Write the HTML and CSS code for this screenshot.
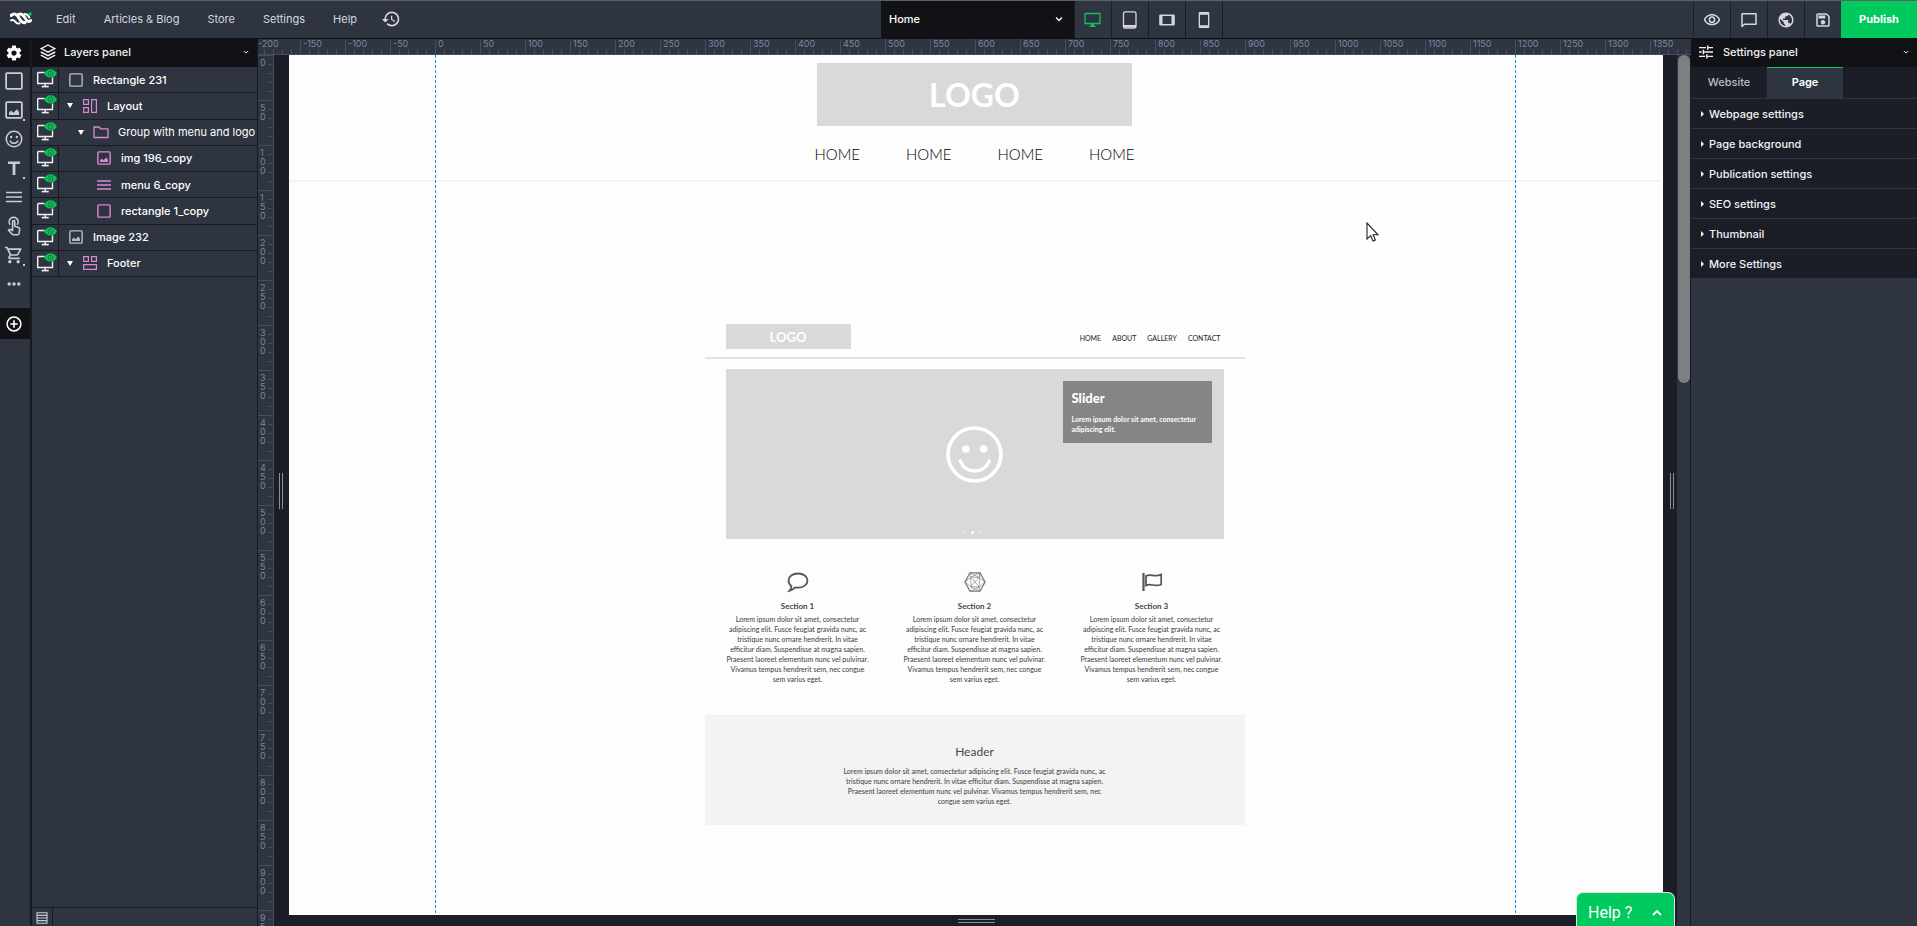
FILE: index.html
```html
<!DOCTYPE html>
<html lang="en">
<head>
<meta charset="utf-8">
<title>Website editor</title>
<link rel="stylesheet" href="styles.css">
</head>
<body>
<svg class="sprite" aria-hidden="true">
  <symbol id="square" viewBox="0 0 16 16"><rect x="1" y="1" width="14" height="14" rx="1" fill="none" stroke="currentColor" stroke-width="1.6"/></symbol>
  <symbol id="picture" viewBox="0 0 16 16"><rect x="1" y="1" width="14" height="14" rx="1" fill="none" stroke="currentColor" stroke-width="1.6"/><path d="M3.5 12.5v-2l2-2 2 2 3-3.200 2 2.400v2.800z" fill="currentColor"/></symbol>
  <symbol id="smile" viewBox="0 0 20 20"><circle cx="10" cy="10" r="8.6" fill="none" stroke="currentColor" stroke-width="1.7"/><circle cx="6.8" cy="7.8" r="1.3" fill="currentColor"/><circle cx="13.2" cy="7.8" r="1.3" fill="currentColor"/><path d="M5.5 11.8a4.9 4.9 0 0 0 9 0" fill="none" stroke="currentColor" stroke-width="1.6"/></symbol>
  <symbol id="text" viewBox="0 0 16 16"><path d="M2 1.500h12v2.600H9.400V15H6.600V4.100H2z" fill="currentColor"/></symbol>
  <symbol id="lines" viewBox="0 0 16 16"><path d="M0 3.500h16M0 8h16M0 12.500h16" stroke="currentColor" stroke-width="1.7"/></symbol>
  <symbol id="touch" viewBox="0 0 24 24"><path d="M7.500 10.500a5.400 5.400 0 1 1 8.200 0" fill="none" stroke="currentColor" stroke-width="1.900"/><path d="M10.300 17.500V6.800c0-.9.600-1.400 1.300-1.400s1.300.5 1.300 1.400v5.400l4.600 1.700c.9.300 1.400 1 1.300 1.900l-.8 5.200c-.1.800-.7 1.400-1.600 1.400h-5.200c-.7 0-1.200-.3-1.600-.7l-4.300-4.600 1.200-1.100z" fill="none" stroke="currentColor" stroke-width="1.900" stroke-linejoin="round"/></symbol>
  <symbol id="cart" viewBox="0 0 24 24"><path d="M15.550 13c.75 0 1.410-.41 1.750-1.030l3.580-6.490A.996.996 0 0 0 20.010 4H5.210l-.94-2H1v2h2l3.600 7.590-1.350 2.440C4.520 15.370 5.480 17 7 17h12v-2H7l1.100-2h7.450zM6.160 6h12.150l-2.760 5H8.530L6.160 6zM7 18c-1.100 0-2 .9-2 2s.9 2 2 2 2-.9 2-2-.9-2-2-2zm10 0c-1.100 0-2 .9-2 2s.9 2 2 2 2-.9 2-2-.9-2-2-2z" fill="currentColor"/></symbol>
  <symbol id="dots" viewBox="0 0 16 16"><circle cx="2.500" cy="8" r="2" fill="currentColor"/><circle cx="8" cy="8" r="2" fill="currentColor"/><circle cx="13.500" cy="8" r="2" fill="currentColor"/></symbol>
  <symbol id="plus" viewBox="0 0 16 16"><circle cx="8" cy="8" r="6.900" fill="none" stroke="currentColor" stroke-width="1.500"/><path d="M8 4.300v7.400M4.300 8h7.400" stroke="currentColor" stroke-width="1.600"/></symbol>
  <symbol id="gear" viewBox="0 0 24 24"><path d="M19.430 12.980c.04-.32.070-.64.070-.98s-.03-.66-.07-.98l2.110-1.650c.19-.15.240-.42.120-.64l-2-3.460c-.12-.22-.39-.3-.61-.22l-2.490 1c-.52-.4-1.080-.73-1.690-.98l-.38-2.650A.488.488 0 0 0 14 2h-4c-.25 0-.46.180-.49.420l-.38 2.650c-.61.250-1.170.590-1.690.980l-2.490-1c-.23-.09-.49 0-.61.220l-2 3.460c-.13.220-.07.490.120.640l2.110 1.650c-.04.320-.07.650-.07.980s.3.660.07.980l-2.110 1.650c-.19.150-.24.420-.12.640l2 3.460c.12.220.39.300.610.220l2.490-1c.52.400 1.080.73 1.690.980l.38 2.650c.3.240.240.420.490.420h4c.25 0 .46-.18.490-.42l.38-2.650c.61-.25 1.170-.59 1.690-.98l2.490 1c.23.090.490 0 .61-.22l2-3.460c.12-.22.070-.49-.12-.64l-2.110-1.650zM12 15.500c-1.930 0-3.500-1.570-3.500-3.500s1.570-3.500 3.500-3.500 3.500 1.570 3.500 3.500-1.570 3.500-3.500 3.500z" fill="currentColor"/></symbol>
  <symbol id="layers" viewBox="0 0 16 16"><g fill="none" stroke="currentColor" stroke-width="1.400"><path d="M8 1l6.800 3.600L8 8.200 1.200 4.600z"/><path d="M.8 8L8 11.600 15.200 8M.8 11.200L8 14.900l7.200-3.700"/></g></symbol>
  <symbol id="chevron" viewBox="0 0 8 8"><path d="M1 2.500l3 3 3-3" fill="none" stroke="currentColor" stroke-width="1.300"/></symbol>
  <symbol id="folder" viewBox="0 0 16 16"><path d="M1 3h5l1.600 1.800H15v8.700H1z" fill="none" stroke="currentColor" stroke-width="1.300" stroke-linejoin="round"/></symbol>
  <symbol id="layout" viewBox="0 0 14 14"><g fill="none" stroke="currentColor" stroke-width="1.200"><path d="M.6.600h4.800v4.800H.600zM.6 8.600h4.800v4.800H.600zM8.600.600h4.800v12.800H8.600z"/></g></symbol>
  <symbol id="footer" viewBox="0 0 14 14"><g fill="none" stroke="currentColor" stroke-width="1.200"><path d="M.6.600h4.800v4.800H.600zM8.600.600h4.800v4.800H8.600zM.6 8.600h12.800v4.800H.600z"/></g></symbol>
  <symbol id="visible" viewBox="0 0 20 20"><path d="M7.500 3.500H1.500a.8.800 0 0 0-.8.800v10.200h14.800V8.500M8.200 14.500v3" fill="none" stroke="#f1f2f5" stroke-width="1.400"/><path d="M4.700 17.600h7" stroke="#f1f2f5" stroke-width="1.600"/><path d="M7 4.500C8.500 1.900 10.700.3 13.500.300S18.500 1.900 20 4.500C18.500 7.100 16.300 8.500 13.500 8.500S8.500 7.100 7 4.500z" fill="#06c755"/><circle cx="13.500" cy="4.500" r="2.500" fill="none" stroke="#2a5a4a" stroke-width=".8"/><circle cx="13.500" cy="4.500" r=".7" fill="#2a5a4a"/></symbol>
  <symbol id="desktop" viewBox="0 0 18 16"><path d="M1.500 1.500h14a.5.500 0 0 1 .5.500v9.500H1V2z" fill="none" stroke="currentColor" stroke-width="1.300"/><path d="M7 11.500h3v2h1.500V15h-6v-1.500H7z" fill="currentColor"/></symbol>
  <symbol id="tablet" viewBox="0 0 16 18"><rect x="1.500" y=".8" width="12.500" height="16.400" rx="1.800" fill="none" stroke="currentColor" stroke-width="1.300"/><path d="M1.500 15.300H14" stroke="currentColor" stroke-width="2.600"/></symbol>
  <symbol id="landscape" viewBox="0 0 18 18"><path d="M2.500 3.500h13c.8 0 1.300.5 1.300 1.300v8.400c0 .8-.5 1.300-1.300 1.300h-13c-.8 0-1.300-.5-1.300-1.300V4.800c0-.8.500-1.300 1.300-1.300zM4.500 5v8h9V5z" fill="currentColor" fill-rule="evenodd"/></symbol>
  <symbol id="phone" viewBox="0 0 18 18"><path d="M5 1h8c.8 0 1.300.5 1.300 1.300v13.400c0 .8-.5 1.300-1.300 1.300H5c-.8 0-1.300-.5-1.300-1.300V2.300C3.700 1.500 4.200 1 5 1zm0 2.700v10.600h8V3.700z" fill="currentColor" fill-rule="evenodd"/></symbol>
  <symbol id="history" viewBox="0 0 24 24"><path d="M13 3a9 9 0 0 0-9 9H1l3.890 3.890.7.140L9 12H6c0-3.870 3.130-7 7-7s7 3.130 7 7-3.130 7-7 7c-1.930 0-3.680-.79-4.940-2.060l-1.420 1.420A8.954 8.954 0 0 0 13 21a9 9 0 0 0 0-18zm-1 5v5l4.280 2.540.72-1.210-3.500-2.080V8H12z" fill="currentColor"/></symbol>
  <symbol id="eye" viewBox="0 0 24 24"><path d="M12 6a9.770 9.770 0 0 1 8.820 5.500C19.170 14.870 15.790 17 12 17s-7.170-2.130-8.820-5.500A9.770 9.770 0 0 1 12 6m0-2C7 4 2.730 7.110 1 11.500 2.730 15.890 7 19 12 19s9.270-3.110 11-7.500C21.270 7.110 17 4 12 4zm0 5a2.500 2.500 0 0 1 0 5 2.500 2.500 0 0 1 0-5m0-2a4.500 4.500 0 1 0 0 9 4.500 4.500 0 0 0 0-9z" fill="currentColor"/></symbol>
  <symbol id="chat" viewBox="0 0 16 16"><path d="M1 1.700h14v10.500H3.500L1 14.400z" fill="none" stroke="currentColor" stroke-width="1.500" stroke-linejoin="round"/></symbol>
  <symbol id="globe" viewBox="0 0 24 24"><path d="M12 2C6.480 2 2 6.480 2 12s4.480 10 10 10 10-4.480 10-10S17.520 2 12 2zm-1 17.930c-3.950-.49-7-3.850-7-7.930 0-.62.080-1.210.21-1.790L9 15v1c0 1.100.9 2 2 2v1.930zm6.900-2.540c-.26-.81-1-1.390-1.900-1.390h-1v-3c0-.55-.45-1-1-1H8v-2h2c.55 0 1-.45 1-1V7h2c1.100 0 2-.9 2-2v-.41c2.930 1.190 5 4.060 5 7.410 0 2.080-.8 3.970-2.100 5.390z" fill="currentColor"/></symbol>
  <symbol id="save" viewBox="0 0 24 24"><path d="M17 3H5a2 2 0 0 0-2 2v14a2 2 0 0 0 2 2h14c1.100 0 2-.9 2-2V7l-4-4zm2 16H5V5h11.170L19 7.830V19zm-7-7c-1.660 0-3 1.340-3 3s1.340 3 3 3 3-1.340 3-3-1.340-3-3-3zM6 6h9v4H6z" fill="currentColor"/></symbol>
  <symbol id="tune" viewBox="0 0 16 16"><path d="M0 3h8M11 3h5M10 .5v5M0 8h3M6 8h10M5 5.500v5M0 13h7M10 13h6M9 10.500v5" stroke="currentColor" stroke-width="1.700"/></symbol>
  <symbol id="list" viewBox="0 0 12 12"><path d="M1 .8h10v10.400H1zM1 3.400h10M1 6h10M1 8.600h10" fill="none" stroke="currentColor" stroke-width="1.100"/></symbol>
</svg>

<div class="app">
  <header class="topbar">
    <nav class="menu" aria-label="Main">
      <svg class="brand" viewBox="0 0 22 14"><g fill="none" stroke="#fff" stroke-linecap="round"><path d="M1 3.500C4 1 6.500 1.800 8.300 5s3.700 6.500 6.700 5.500" stroke-width="3"/><path d="M8.500 2.300C11 1.200 13 2.500 14.600 5.200S18.200 11 20.800 8.500" stroke-width="2.900"/><path d="M14.800 2c2 0 3.400 1.400 4.600 3.500" stroke-width="2"/><path d="M1 8.300c2-1 3.200-.1 4.400 1.500 1.100 1.500 2.400 2 4 1.500" stroke-width="2"/></g><circle cx="20" cy="2" r="1.800" fill="#06c755"/></svg>
      <button class="menu-item">Edit</button>
      <button class="menu-item">Articles &amp; Blog</button>
      <button class="menu-item">Store</button>
      <button class="menu-item">Settings</button>
      <button class="menu-item">Help</button>
      <button class="menu-item" aria-label="History"><svg class="icon-20"><use href="#history"/></svg></button>
    </nav>
    <div class="devices">
      <label class="page-picker"><select aria-label="Page"><option>Home</option></select><svg class="icon-8"><use href="#chevron"/></svg></label>
      <button class="bar-button on" aria-label="Desktop"><svg class="icon-18"><use href="#desktop"/></svg></button>
      <button class="bar-button" aria-label="Tablet"><svg class="icon-18"><use href="#tablet"/></svg></button>
      <button class="bar-button" aria-label="Phone landscape"><svg class="icon-18"><use href="#landscape"/></svg></button>
      <button class="bar-button" aria-label="Phone"><svg class="icon-18"><use href="#phone"/></svg></button>
    </div>
    <div class="actions">
      <button class="bar-button" aria-label="Preview"><svg class="icon-18"><use href="#eye"/></svg></button>
      <button class="bar-button" aria-label="Comments"><svg class="icon-16"><use href="#chat"/></svg></button>
      <button class="bar-button" aria-label="Website"><svg class="icon-18"><use href="#globe"/></svg></button>
      <button class="bar-button" aria-label="Save"><svg class="icon-18"><use href="#save"/></svg></button>
      <button class="publish">Publish</button>
    </div>
  </header>

  <main class="workspace">
    <aside class="tools" aria-label="Tools">
      <button class="tool dark" aria-label="Options"><svg class="icon-18"><use href="#gear"/></svg></button>
      <button class="tool" aria-label="Rectangle"><svg class="icon-18"><use href="#square"/></svg></button>
      <button class="tool more" aria-label="Image"><svg class="icon-18"><use href="#picture"/></svg></button>
      <button class="tool" aria-label="Icon"><svg class="icon-18"><use href="#smile"/></svg></button>
      <button class="tool more" aria-label="Text"><svg class="icon-16"><use href="#text"/></svg></button>
      <button class="tool" aria-label="Menu"><svg class="icon-16"><use href="#lines"/></svg></button>
      <button class="tool" aria-label="Button"><svg class="icon-20"><use href="#touch"/></svg></button>
      <button class="tool more" aria-label="Store"><svg class="icon-20"><use href="#cart"/></svg></button>
      <button class="tool" aria-label="More"><svg class="icon-14"><use href="#dots"/></svg></button>
      <button class="tool dark add" aria-label="Add"><svg class="icon-16"><use href="#plus"/></svg></button>
    </aside>

    <aside class="layers">
      <h2 class="panel-head"><svg class="icon-16"><use href="#layers"/></svg><span>Layers panel</span><svg class="icon-6"><use href="#chevron"/></svg></h2>
      <ul class="layer-list">
        <li class="layer"><span class="view"><svg class="icon-20"><use href="#visible"/></svg></span><span class="name root"><svg class="icon-14"><use href="#square"/></svg>Rectangle 231</span></li>
        <li class="layer"><span class="view"><svg class="icon-20"><use href="#visible"/></svg></span><span class="name branch"><i class="caret"></i><svg class="icon-14 pink"><use href="#layout"/></svg>Layout</span></li>
        <li class="layer"><span class="view open"><svg class="icon-20"><use href="#visible"/></svg></span><span class="name group"><i class="caret"></i><svg class="icon-16 pink"><use href="#folder"/></svg>Group with menu and logo copy</span></li>
        <li class="layer"><span class="view"><svg class="icon-20"><use href="#visible"/></svg></span><span class="name child"><svg class="icon-14 pink"><use href="#picture"/></svg>img 196_copy</span></li>
        <li class="layer"><span class="view"><svg class="icon-20"><use href="#visible"/></svg></span><span class="name child"><svg class="icon-14 pink"><use href="#lines"/></svg>menu 6_copy</span></li>
        <li class="layer"><span class="view"><svg class="icon-20"><use href="#visible"/></svg></span><span class="name child"><svg class="icon-14 pink"><use href="#square"/></svg>rectangle 1_copy</span></li>
        <li class="layer"><span class="view"><svg class="icon-20"><use href="#visible"/></svg></span><span class="name root"><svg class="icon-14"><use href="#picture"/></svg>Image 232</span></li>
        <li class="layer"><span class="view"><svg class="icon-20"><use href="#visible"/></svg></span><span class="name branch"><i class="caret"></i><svg class="icon-14 pink"><use href="#footer"/></svg>Footer</span></li>
      </ul>
      <div class="layers-foot"><button aria-label="List view"><svg class="icon-12"><use href="#list"/></svg></button></div>
    </aside>

    <section class="stage">
      <div class="ruler-x"><span>-200</span><span>-150</span><span>-100</span><span>-50</span><span>0</span><span>50</span><span>100</span><span>150</span><span>200</span><span>250</span><span>300</span><span>350</span><span>400</span><span>450</span><span>500</span><span>550</span><span>600</span><span>650</span><span>700</span><span>750</span><span>800</span><span>850</span><span>900</span><span>950</span><span>1000</span><span>1050</span><span>1100</span><span>1150</span><span>1200</span><span>1250</span><span>1300</span><span>1350</span></div>
      <div class="stage-body">
        <div class="ruler-y"><span>0</span><span>50</span><span>100</span><span>150</span><span>200</span><span>250</span><span>300</span><span>350</span><span>400</span><span>450</span><span>500</span><span>550</span><span>600</span><span>650</span><span>700</span><span>750</span><span>800</span><span>850</span><span>900</span><span>950</span></div>
        <div class="grip side"><i></i></div>
        <div class="canvas">
          <div class="page">
            <div class="site-head">
              <div class="site-logo">LOGO</div>
              <nav class="site-nav" aria-label="Site"><a href="#">HOME</a><a href="#">HOME</a><a href="#">HOME</a><a href="#">HOME</a></nav>
            </div>
            <div class="mock">
              <div class="mock-head">
                <div class="mock-logo">LOGO</div>
                <div class="mock-nav"><span>HOME</span><span>ABOUT</span><span>GALLERY</span><span>CONTACT</span></div>
              </div>
              <div class="slider">
                <svg class="slider-face" viewBox="0 0 56 56"><circle cx="28" cy="28" r="26" fill="none" stroke="#fff" stroke-width="3.600"/><circle cx="19.500" cy="22.500" r="3.700" fill="#fff"/><circle cx="37" cy="22.500" r="3.700" fill="#fff"/><path d="M14 34.500c5.500 13 22.500 13 28.500 0" fill="none" stroke="#fff" stroke-width="3.300" stroke-linecap="round"/></svg>
                <div class="slide-card"><h3>Slider</h3><p>Lorem ipsum dolor sit amet, consectetur<br>adipiscing elit.</p></div>
                <div class="slider-dots"><i></i><i></i><i></i></div>
              </div>
              <div class="sections">
                <article><svg class="icon-22" viewBox="0 0 22 22"><path d="M11 2.500c5.400 0 9.500 3 9.500 7s-4.100 7.200-9.500 7.200c-1 0-2-.1-3-.3-1.500 1.900-3.200 3-5.500 3.400 1.300-1.300 1.900-2.600 1.900-4.600-1.900-1.400-2.900-3.400-2.900-5.700 0-4 4.100-7 9.500-7z" fill="none" stroke="#555" stroke-width="1.800"/></svg><h4>Section 1</h4><p>Lorem ipsum dolor sit amet, consectetur<br>adipiscing elit. Fusce feugiat gravida nunc, ac<br>tristique nunc ornare hendrerit. In vitae<br>efficitur diam. Suspendisse at magna sapien.<br>Praesent laoreet elementum nunc vel pulvinar.<br>Vivamus tempus hendrerit sem, nec congue<br>sem varius eget.</p></article>
                <article><svg class="icon-22" viewBox="0 0 22 22"><g fill="none" stroke="#777"><path d="M6 1.800h10L21 11l-5 9.200H6L1 11z" stroke-width="1.300"/><path d="M6 1.800l1.500 16M16 1.800l-1 16M1 11l6-5 8 .5 6 4.500M7 6l8 10M15 6.500L6.500 15.500M1 11l5.500 4.500L15 16l6-5M6 1.800l9 4.700 1-4.700L7 6M6 20.200l9-4.200 1 4.200-9.500-4.700" stroke-width=".6"/></g></svg><h4>Section 2</h4><p>Lorem ipsum dolor sit amet, consectetur<br>adipiscing elit. Fusce feugiat gravida nunc, ac<br>tristique nunc ornare hendrerit. In vitae<br>efficitur diam. Suspendisse at magna sapien.<br>Praesent laoreet elementum nunc vel pulvinar.<br>Vivamus tempus hendrerit sem, nec congue<br>sem varius eget.</p></article>
                <article><svg class="icon-22" viewBox="0 0 22 22"><path d="M2.500 2v18" stroke="#555" stroke-width="2.200"/><path d="M5 5c5-3 8 1.800 15.200-1.500v10C13 16.500 10 11.500 5 14.500z" fill="none" stroke="#555" stroke-width="1.700"/></svg><h4>Section 3</h4><p>Lorem ipsum dolor sit amet, consectetur<br>adipiscing elit. Fusce feugiat gravida nunc, ac<br>tristique nunc ornare hendrerit. In vitae<br>efficitur diam. Suspendisse at magna sapien.<br>Praesent laoreet elementum nunc vel pulvinar.<br>Vivamus tempus hendrerit sem, nec congue<br>sem varius eget.</p></article>
              </div>
              <div class="banner"><h3>Header</h3><p>Lorem ipsum dolor sit amet, consectetur adipiscing elit. Fusce feugiat gravida nunc, ac<br>tristique nunc ornare hendrerit. In vitae efficitur diam. Suspendisse at magna sapien.<br>Praesent laoreet elementum nunc vel pulvinar. Vivamus tempus hendrerit sem, nec<br>congue sem varius eget.</p></div>
            </div>
            <div class="guides"></div>
            <svg class="pointer" viewBox="0 0 13 20"><path d="M1 1v16l3.700-3.400L7 19l2.400-1-2.300-5.200H12z" fill="#fff" stroke="#222" stroke-width="1.100"/></svg>
          </div>
          <div class="grip bottom"><i></i></div>
        </div>
        <div class="grip side right"><i></i></div>
        <div class="scrollbar"><i></i></div>
      </div>
    </section>

    <aside class="settings">
      <h2 class="panel-head"><svg class="icon-14"><use href="#tune"/></svg><span>Settings panel</span><svg class="icon-6"><use href="#chevron"/></svg></h2>
      <div class="tabs"><button>Website</button><button class="active">Page</button></div>
      <button class="setting">Webpage settings</button>
      <button class="setting">Page background</button>
      <button class="setting">Publication settings</button>
      <button class="setting">SEO settings</button>
      <button class="setting">Thumbnail</button>
      <button class="setting">More Settings</button>
    </aside>
  </main>
  <button class="help">Help ?<svg viewBox="0 0 12 12"><path d="M2 8l4-4 4 4" fill="none" stroke="#fff" stroke-width="1.800"/></svg></button>
</div>
</body>
</html>
```

FILE: styles.css
```css
* { box-sizing: border-box; }
html, body { height: 100%; }
body { margin: 0; font: 500 11px/16px Inter, "Liberation Sans", sans-serif; color: #f1f2f5; background: #2f3441; }
button, select { font: inherit; color: inherit; background: none; border: 0; padding: 0; margin: 0; border-radius: 0; }
h2, h3, h4, p, ul { margin: 0; padding: 0; }
svg { display: block; flex: none; }
.sprite { position: absolute; width: 0; height: 0; }
.icon-6 { width: 6px; height: 6px; }
.icon-8 { width: 8px; height: 8px; }
.icon-12 { width: 12px; height: 12px; }
.icon-14 { width: 14px; height: 14px; }
.icon-16 { width: 16px; height: 16px; }
.icon-18 { width: 18px; height: 18px; }
.icon-20 { width: 20px; height: 20px; }
.icon-22 { width: 22px; height: 22px; }

.app { height: 100vh; display: flex; flex-direction: column; overflow: hidden; position: relative; }

/* Top bar */
.topbar { flex: none; height: 39px; display: grid; grid-template-columns: 881px 1fr auto; border-top: 1px solid #606060; border-bottom: 1px solid #111216; color: #d4d7e0; }
.menu { display: flex; align-items: center; padding: 0 0 1px 10px; gap: 28px; font-weight: 400; }
.brand { width: 22px; height: 14px; margin-right: -4px; }
.menu-item { display: flex; }
.menu-item:last-child { margin-left: -4px; }
.devices, .actions { display: flex; }
.page-picker { width: 193px; display: flex; align-items: center; background: #111216; color: #fff; padding: 0 11px 1px 0; }
.page-picker select { flex: 1; appearance: none; padding-left: 8px; outline: 0; }
.bar-button { width: 37px; display: flex; align-items: center; justify-content: center; border-left: 1px solid #1b1e26; }
.devices .bar-button:last-child { border-right: 1px solid #1b1e26; width: 38px; }
.bar-button.on { color: #06c755; }
.publish { width: 76px; background: #00c95e; color: #fff; font-weight: 700; padding-bottom: 2px; }

.workspace { flex: 1; min-height: 0; display: grid; grid-template-columns: 32px 226px 1fr 226px; }

/* Tool strip */
.tools { border-right: 2px solid #181a21; display: flex; flex-direction: column; color: #c9ccd7; }
.tool { height: 29px; flex: none; display: flex; align-items: center; justify-content: center; position: relative; padding: 0 2px 1px 0; }
.tool.dark { background: #111216; color: #fff; height: 28px; }
.tool.add { height: 31px; margin-top: 9px; padding-bottom: 0; }
.tool.more::after { content: ""; position: absolute; right: 5px; bottom: 4px; width: 2px; height: 2px; background: #c9ccd7; }

/* Layers */
.panel-head { height: 28px; display: flex; align-items: center; gap: 8px; padding: 0 8px 2px 8px; background: #111216; color: #f1f2f5; font-size: 11px; font-weight: 500; }
.panel-head span { flex: 1; }
.layers { display: flex; flex-direction: column; border-right: 1px solid #181a21; min-height: 0; }
.layer-list { list-style: none; height: 210px; display: grid; grid-template-rows: repeat(8, 1fr); }
.layer { display: flex; min-width: 0; border-bottom: 1px solid #181a21; }
.view { width: 27px; flex: none; padding: 2px 0 0 5px; border-right: 1px solid #181a21; }
.view.open { border-color: transparent; }
.name { flex: 1; min-width: 0; display: flex; align-items: center; gap: 10px; overflow: hidden; white-space: nowrap; color: #fff; }
.name svg { color: #b9bcc8; }
.name .pink { color: #d78bd3; }
.name.root { padding-left: 10px; }
.name.branch { padding-left: 8px; }
.name.group { padding-left: 19px; gap: 9px; font-weight: 400; }
.name.child { padding-left: 38px; gap: 10px; }
.caret { flex: none; border: solid transparent; border-width: 5px 3px 0; border-top-color: #fff; }
.layers-foot { height: 19px; margin-top: auto; border-top: 1px solid #181a21; }
.layers-foot button { width: 21px; height: 100%; display: flex; align-items: center; justify-content: center; padding-top: 2px; border-right: 1px solid #181a21; color: #c9ccd7; }

/* Rulers */
.stage { min-width: 0; display: flex; flex-direction: column; min-height: 0; }
.ruler-x { flex: none; height: 16px; display: flex; overflow: hidden; border-bottom: 1px solid #454c66; color: #7d86a3; font: 9px/10px Inter, sans-serif;
  background: linear-gradient(90deg, #454c66 1px, transparent 1px) -3px 0 / 45px 15px repeat-x, linear-gradient(90deg, #454c66 1px, transparent 1px) -3px 10px / 9px 5px repeat-x; }
.ruler-x span { flex: none; width: 45px; }
.stage-body { flex: 1; min-height: 0; display: grid; grid-template-columns: 16px 15px 1fr 14px 14px; }
.ruler-y { overflow: hidden; border-right: 1px solid #454c66; color: #7d86a3; font: 9px/9px Inter, sans-serif;
  background: linear-gradient(#454c66 1px, transparent 1px) 0 0 / 15px 45px repeat-y, linear-gradient(#454c66 1px, transparent 1px) 10px 0 / 5px 9px repeat-y; }
.ruler-y span { display: block; height: 45px; width: 9px; padding: 3px 0 0 2px; word-break: break-all; }

/* Canvas */
.grip { background: #1b1e26; display: flex; align-items: center; justify-content: center; }
.grip i { border: solid #8c8f97; }
.grip.side { padding-right: 2px; }
.grip.side.right { padding: 0 0 0 3px; }
.grip.side i { width: 4px; height: 36px; border-width: 0 1px; }
.grip.bottom { height: 11px; }
.grip.bottom i { height: 4px; width: 37px; border-width: 1px 0; }
.canvas { min-width: 0; min-height: 0; display: flex; flex-direction: column; }
.page { flex: 1; min-height: 0; overflow: hidden; position: relative; background: #fdfdfd; color: #4a4a4a; font-family: Lato, sans-serif; padding-right: 3px; }
.guides { position: absolute; top: 0; bottom: 0; left: calc(50% - 541px); width: 1081px;
  background: repeating-linear-gradient(#0d8fe8 0 3px, transparent 3px 5px) 0 0 / 1px 100% no-repeat, repeating-linear-gradient(#0d8fe8 0 3px, transparent 3px 5px) 100% 0 / 1px 100% no-repeat; }
.pointer { position: absolute; left: 1077px; top: 167px; width: 13px; height: 20px; }
.site-head { height: 127px; padding-top: 8px; display: flex; flex-direction: column; align-items: center; border-bottom: 2px solid #f3f3f3; }
.site-logo { width: 315px; height: 63px; display: flex; align-items: center; justify-content: center; background: #d9d9d9; color: #fff; font-size: 32px; line-height: 40px; font-weight: 700; }
.site-nav { display: flex; gap: 46px; margin-top: 18px; }
.site-nav a { color: #000; text-decoration: none; font-size: 15px; line-height: 20px; font-weight: 300; }
.mock { width: 540px; margin: 131px auto 0; }
.mock-head { height: 46px; padding: 11px 24px 8px 21px; display: flex; justify-content: space-between; align-items: flex-start; border-bottom: 2px solid #e4e4e4; }
.mock-logo { width: 125px; height: 25px; display: flex; align-items: center; justify-content: center; background: #d9d9d9; color: #fff; font-size: 13px; font-weight: 700; }
.mock-nav { display: flex; gap: 11px; font-size: 7px; line-height: 10px; font-weight: 400; padding-top: 9px; color: #222; }
.slider { height: 170px; margin: 10px 21px 0; background: #d9d9d9; position: relative; display: flex; align-items: center; justify-content: center; color: #fff; }
.slider-face { width: 57px; height: 57px; }
.slide-card { position: absolute; top: 12px; right: 12px; width: 149px; height: 62px; background: #858585; padding: 9px; }
.slide-card h3 { font-size: 13px; line-height: 16px; font-weight: 900; }
.slide-card p { font-size: 7px; line-height: 10px; font-weight: 700; margin-top: 8px; white-space: nowrap; }
.slider-dots { position: absolute; bottom: 5px; display: flex; gap: 5px; margin-right: 4px; }
.slider-dots i { width: 2px; height: 2px; border-radius: 50%; background: #eee; }
.slider-dots i:nth-child(2) { background: #fff; width: 3px; height: 3px; }
.sections { display: grid; grid-template-columns: repeat(3, 177px); justify-content: center; padding-top: 32px; height: 176px; text-align: center; font-size: 7px; line-height: 10px; }
.sections svg { margin: 0 auto 7px; }
.sections h4 { font-size: 8px; line-height: 12px; margin-bottom: 2px; color: #444; }
.sections p { white-space: nowrap; }
.banner { height: 110px; padding-top: 29px; background: #f3f3f3; text-align: center; font-size: 7px; line-height: 10px; }
.banner h3 { font-size: 12px; line-height: 16px; font-weight: 400; margin-bottom: 6px; }
.scrollbar { border-right: 1px solid #181a21; padding-left: 1px; }
.scrollbar i { display: block; height: 328px; border-radius: 6px; background: #7e7f83; }

/* Settings */
.settings .panel-head { gap: 10px; }
.tabs { display: flex; height: 32px; background: #1b1e26; border-bottom: 1px solid #2f3441; color: #b9bcc8; }
.tabs button { width: 76px; border-top: 1px solid transparent; padding-bottom: 2px; }
.tabs .active { background: #2f3441; border-color: #06c755; color: #fff; font-weight: 600; }
.setting { width: 100%; height: 30px; display: flex; align-items: center; gap: 5px; padding-left: 10px; background: #1b1e26; border-bottom: 1px solid #2f3441; }
.setting::before { content: ""; border: solid transparent; border-width: 3px 0 3px 3px; border-left-color: #f1f2f5; }

.help { position: absolute; right: 242px; bottom: 0; width: 99px; height: 34px; display: flex; align-items: center; justify-content: space-between; padding: 7px 11px 0 11px; border: 1px solid #dfe6e2; border-bottom: 0; border-radius: 7px 7px 0 0; background: #00c95e; color: #fff; font: 16px/20px Roboto, sans-serif; }
.help svg { width: 12px; height: 12px; }
```
